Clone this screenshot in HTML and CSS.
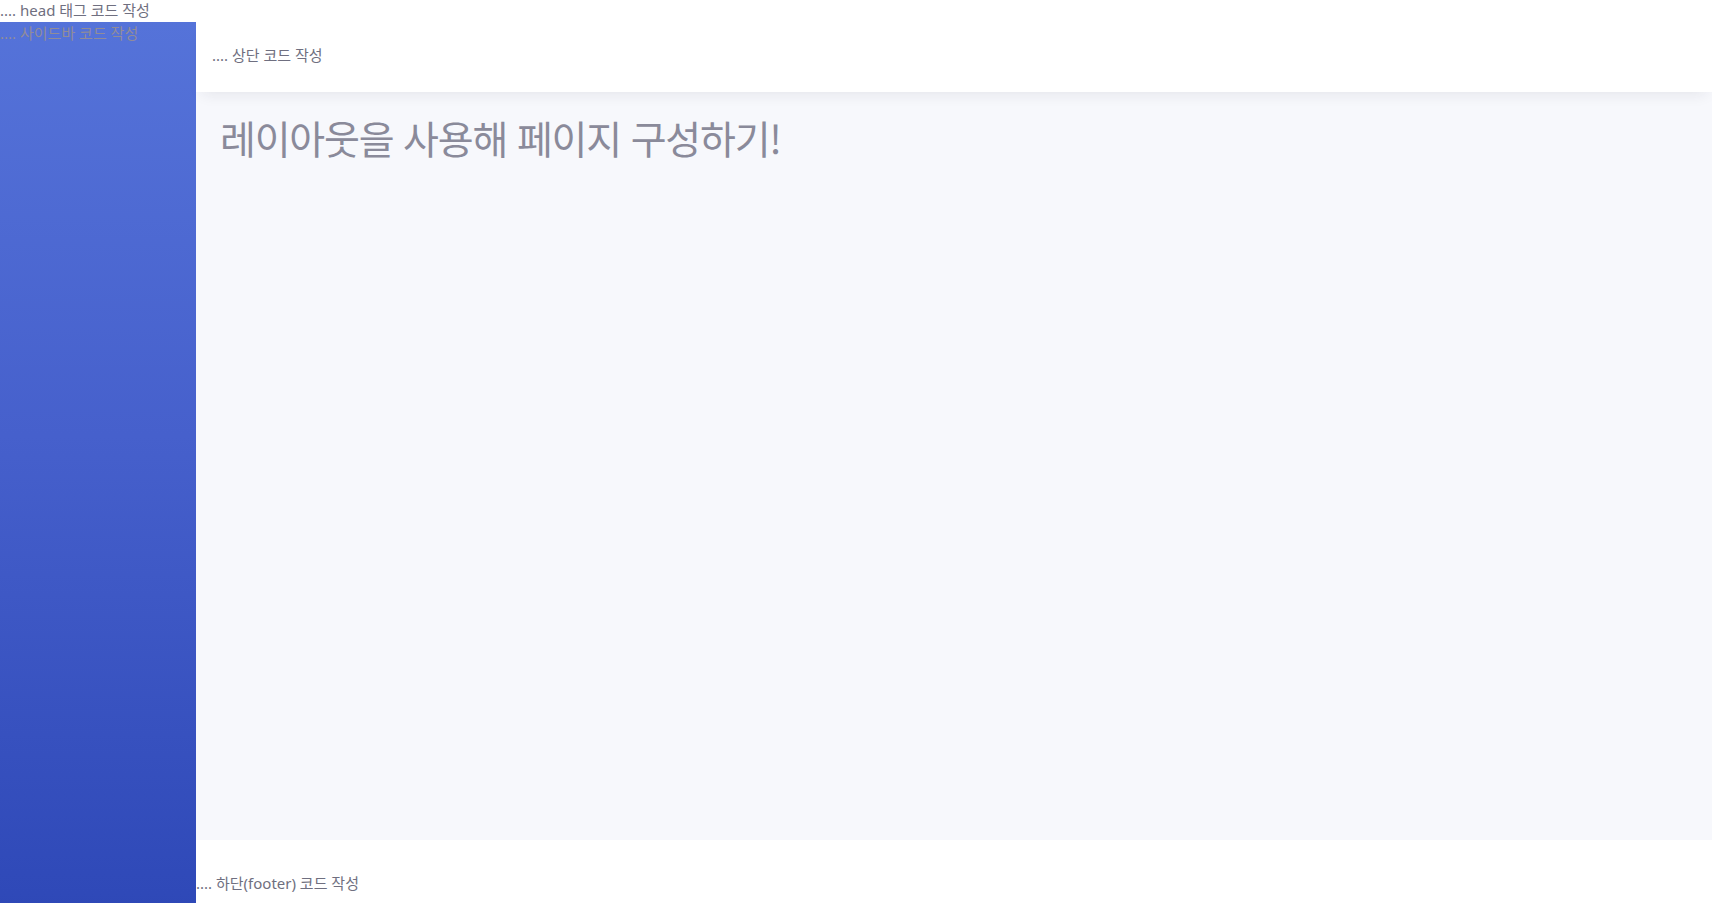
FILE: index.html
```html
<!DOCTYPE html>
<html lang="ko">
<head>
<meta charset="utf-8">
<title>레이아웃</title>
<link rel="stylesheet" href="styles.css">
</head>
<body>
<div class="head-note">.... head 태그 코드 작성</div>
<div class="layout">
  <aside class="sidebar">.... 사이드바 코드 작성</aside>
  <header class="top">.... 상단 코드 작성</header>
  <main class="content">
    <h1 class="title">레이아웃을 사용해 페이지 구성하기!</h1>
  </main>
  <footer class="bottom">.... 하단(footer) 코드 작성</footer>
</div>
</body>
</html>
```

FILE: styles.css
```css
html {
  overflow-y: scroll;
}
html::-webkit-scrollbar {
  width: 5px;
}
html::-webkit-scrollbar-track {
  background: #f6f6f6;
  border-left: 1px solid #e4e4e4;
}
html::-webkit-scrollbar-thumb {
  background: #c9c9c9;
  border-radius: 3px;
}
body {
  margin: 0;
  font-family: "Noto Sans", "Noto Sans CJK KR", sans-serif;
  font-size: 15px;
  color: #6f6f80;
  background: #ffffff;
}
.head-note {
  height: 22px;
  line-height: 20px;
  white-space: nowrap;
}
.layout {
  display: grid;
  grid-template-columns: 196px 1fr;
  grid-template-rows: 70px 748px 100px;
}
.sidebar {
  grid-row: 1 / 4;
  grid-column: 1;
  background: linear-gradient(180deg, #5573d9 0%, #4660cc 45%, #2f49b8 95%, #2c45b2 100%);
  color: #918c98;
  line-height: 22px;
  white-space: nowrap;
  overflow: hidden;
}
.top {
  grid-row: 1;
  grid-column: 2;
  background: #ffffff;
  display: flex;
  align-items: center;
  padding: 0 16px 5px;
  box-shadow: 0 8px 14px -6px rgba(30, 30, 60, 0.09);
  position: relative;
  z-index: 1;
}
.content {
  grid-row: 2;
  grid-column: 2;
  background: #f7f8fc;
  padding: 17px 24px;
}
.title {
  margin: 0;
  font-family: "Noto Sans CJK KR", "Noto Sans", sans-serif;
  font-weight: 400;
  font-size: 39px;
  letter-spacing: -1.2px;
  line-height: 56px;
  color: #8a8a9a;
}
.bottom {
  grid-row: 3;
  grid-column: 2;
  background: #ffffff;
  padding-top: 32px;
  line-height: 22px;
}
```
